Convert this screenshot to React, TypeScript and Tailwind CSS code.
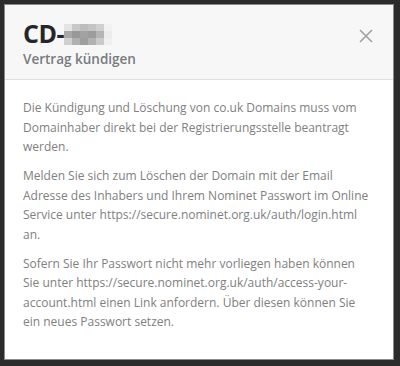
import React from "react";

const pix = [
  ["#e4e4e4", "#c8c8c8", "#bcbcbc", "#c4c4c4", "#d0d0d0", "#f2f2f2"],
  ["#a8a8a8", "#989898", "#a2a2a2", "#9c9c9c", "#b4b4b4", "#ececec"],
  ["#d0d0d0", "#b0b0b0", "#9e9e9e", "#b2b2b2", "#cacaca", "#f0f0f0"],
];

export default function App() {
  return (
    <div className="w-[400px] h-[366px] bg-[#2b2b2b] p-[4px] pr-[6px] pb-[6px]" style={{ fontFamily: '"Open Sans", sans-serif' }}>
      <div className="w-[390px] h-[356px] bg-white border border-[#8a8a8a] flex flex-col">
        <div className="bg-[#f7f7f7] border-b border-[#e0e0e0] h-[75px] pl-[18px] pr-[20px] pt-[12px] flex justify-between">
          <div className="flex flex-col">
            <div className="flex items-center h-[32px]">
              <span className="text-[25px] font-bold text-[#262626] leading-none tracking-[-0.5px]">CD-</span>
              <div className="flex flex-col mt-[2px]">
                {pix.map((row, i) => (
                  <div key={i} className="flex">
                    {row.map((c, j) => (
                      <div key={j} className="w-[8px] h-[7px]" style={{ backgroundColor: c }} />
                    ))}
                  </div>
                ))}
              </div>
            </div>
            <div className="text-[13.5px] font-semibold text-[#787b7e] leading-[18px] mt-[1px]">Vertrag kündigen</div>
          </div>
          <svg width="14" height="14" viewBox="0 0 14 14" className="mt-[12px]">
            <path d="M1 1 L13 13 M13 1 L1 13" stroke="#a0a0a0" strokeWidth="1.6" />
          </svg>
        </div>
        <div className="pl-[18px] pr-[10px] pt-[18px] text-[12px] leading-[19.5px] text-[#808080] flex flex-col gap-[9.5px] whitespace-nowrap">
          <p>Die Kündigung und Löschung von co.uk Domains muss vom<br />Domainhaber direkt bei der Registrierungsstelle beantragt<br />werden.</p>
          <p>Melden Sie sich zum Löschen der Domain mit der Email<br />Adresse des Inhabers und Ihrem Nominet Passwort im Online<br />Service unter https://secure.nominet.org.uk/auth/login.html<br />an.</p>
          <p>Sofern Sie Ihr Passwort nicht mehr vorliegen haben können<br />Sie unter https://secure.nominet.org.uk/auth/access-your-<br />account.html einen Link anfordern. Über diesen können Sie<br />ein neues Passwort setzen.</p>
        </div>
      </div>
    </div>
  );
}
